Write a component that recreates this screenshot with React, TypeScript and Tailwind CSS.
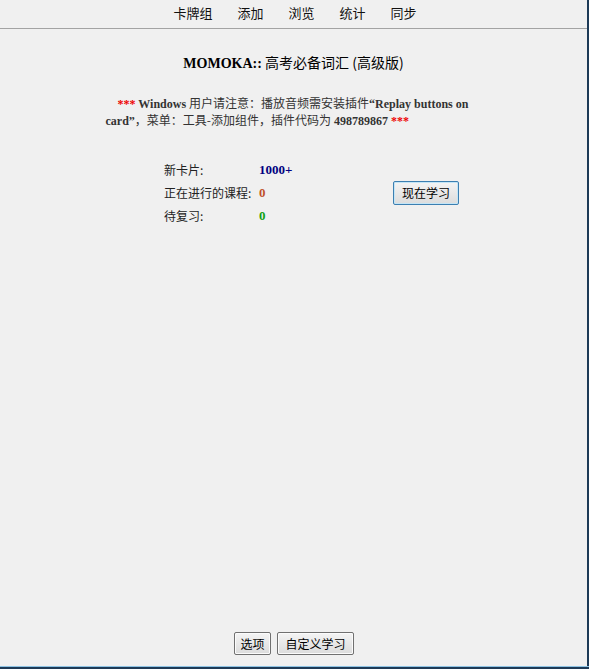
import React from 'react';

const cjk = 'font-["Microsoft_YaHei","Noto_Sans_CJK_SC",sans-serif]';
const serif = 'font-["Liberation_Serif","Noto_Sans_CJK_SC",serif]';

const navItems = ['卡牌组', '添加', '浏览', '统计', '同步'];

function WinButton({ label, focused, className }: { label: string; focused?: boolean; className?: string }) {
  return (
    <button
      className={
        'flex items-center justify-center rounded-[2px] border text-[12px] text-black bg-gradient-to-b from-[#f4f4f4] to-[#dcdcdc] ' +
        (focused
          ? 'border-[#3c7fb1] shadow-[inset_0_0_0_1px_#c4e5f6] '
          : 'border-[#707070] shadow-[inset_0_0_0_1px_#fbfbfb] ') +
        cjk +
        ' ' +
        (className ?? '')
      }
    >
      {label}
    </button>
  );
}

export default function App() {
  return (
    <div className="flex h-[669px] w-[589px] flex-col overflow-hidden bg-[#f0f0f0]">
      <div className="flex flex-1 flex-col border-r-2 border-[#1d3a57]">
        {/* top toolbar */}
        <nav className={'flex h-[29px] items-center justify-center gap-[25px] border-b border-[#a3a3a3] pb-[2px] pl-[3px] text-[13px] text-[#111] ' + cjk}>
          {navItems.map((item) => (
            <span key={item}>{item}</span>
          ))}
        </nav>

        {/* deck overview */}
        <div className="flex flex-1 flex-col">
          <h1 className="mt-[23px] text-center text-[14px] leading-[20px] text-black">
            <span className={'font-bold ' + serif}>MOMOKA::</span>
            <span className={cjk}> 高考必备词汇 (高级版)</span>
          </h1>

          <div className={'mx-auto mt-[21px] w-[376px] text-[12px] leading-[16px] font-bold text-[#333] indent-[12px] ' + serif}>
            <span className="text-[#e00]">***</span> Windows <span className={cjk + ' font-normal'}>用户请注意：播放音频需安装插件</span>“Replay buttons on card”
            <span className={cjk + ' font-normal'}>，菜单：工具-添加组件，插件代码为</span> 498789867{' '}
            <span className="text-[#e00]">***</span>
          </div>

          <div className={'mt-[29px] grid grid-cols-[95px_134px_auto] grid-rows-[23px_23px_23px] items-center pl-[164px] text-[12px] ' + cjk}>
            <span className="text-[#222]">新卡片:</span>
            <span className={'text-[13px] font-bold text-[#000080] ' + serif}>1000+</span>
            <div className="row-span-3 flex items-center">
              <WinButton label="现在学习" focused className="h-[24px] w-[66px]" />
            </div>
            <span className="text-[#222]">正在进行的课程:</span>
            <span className={'text-[13px] font-bold text-[#c0502a] ' + serif}>0</span>
            <span className="text-[#222]">待复习:</span>
            <span className={'text-[13px] font-bold text-[#11a011] ' + serif}>0</span>
          </div>

          <div className="flex-1" />

          {/* bottom bar */}
          <div className="mb-[11px] flex justify-center gap-[6px] pl-[1px]">
            <WinButton label="选项" className="h-[23px] w-[37px]" />
            <WinButton label="自定义学习" className="h-[23px] w-[77px]" />
          </div>
        </div>
      </div>
      <div className="h-px bg-[#8fc3e3]" />
      <div className="h-[2px] bg-[#1d3a57]" />
    </div>
  );
}
